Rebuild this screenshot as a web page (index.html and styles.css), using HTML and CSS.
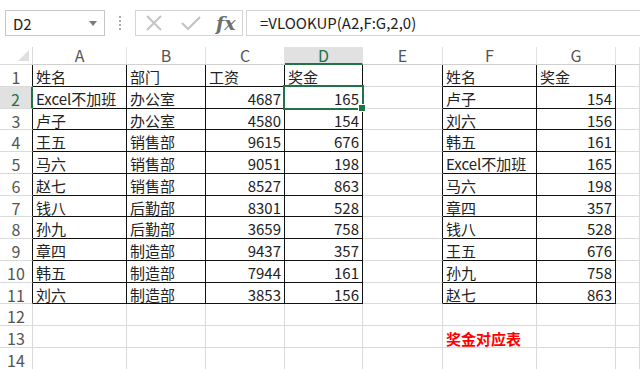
FILE: index.html
```html
<!DOCTYPE html>
<html lang="zh">

<head>
    <meta charset="utf-8">
    <title>VLOOKUP</title>
    <link rel="stylesheet" href="styles.css">
</head>

<body>
    <header class="toolbar">
        <div class="namebox">
            <span>D2</span>
            <svg class="arrow" width="8" height="5" viewBox="0 0 8 5"><path d="M0 0h8L4 5z" fill="#7a7a7a"/></svg>
        </div>
        <div class="dots">
            <svg width="4" height="14" viewBox="0 0 4 14"><g fill="#a8a8a8"><rect x="1" y="0" width="2" height="2"/><rect x="1" y="4" width="2" height="2"/><rect x="1" y="8" width="2" height="2"/><rect x="1" y="12" width="2" height="2"/></g></svg>
        </div>
        <div class="buttons">
            <svg width="18" height="16" viewBox="0 0 18 16"><path d="M2 1l14 14M16 1L2 15" stroke="#c4c4c4" stroke-width="2" fill="none"/></svg>
            <svg width="20" height="16" viewBox="0 0 20 16"><path d="M1 8l6 6L19 2" stroke="#c4c4c4" stroke-width="2.2" fill="none"/></svg>
            <span class="fx">fx</span>
        </div>
        <div class="formula">=VLOOKUP(A2,F:G,2,0)</div>
    </header>

    <main class="sheet"></main>

    <script>
        const kolonner = ["A", "B", "C", "D", "E", "F", "G"];

        const venstre = [
            ["姓名", "部门", "工资", "奖金"],
            ["Excel不加班", "办公室", "4687", "165"],
            ["卢子", "办公室", "4580", "154"],
            ["王五", "销售部", "9615", "676"],
            ["马六", "销售部", "9051", "198"],
            ["赵七", "销售部", "8527", "863"],
            ["钱八", "后勤部", "8301", "528"],
            ["孙九", "后勤部", "3659", "758"],
            ["章四", "制造部", "9437", "357"],
            ["韩五", "制造部", "7944", "161"],
            ["刘六", "制造部", "3853", "156"]
        ];

        const hoejre = [
            ["姓名", "奖金"],
            ["卢子", "154"],
            ["刘六", "156"],
            ["韩五", "161"],
            ["Excel不加班", "165"],
            ["马六", "198"],
            ["章四", "357"],
            ["钱八", "528"],
            ["王五", "676"],
            ["孙九", "758"],
            ["赵七", "863"]
        ];

        const sheet = document.querySelector(".sheet");

        function celle(tekst, klasser) {
            const div = document.createElement("div");
            div.className = "c " + klasser;
            div.textContent = tekst;
            sheet.appendChild(div);
        }

        // kolonne overskrifter
        celle("", "corner");
        kolonner.forEach(k => celle(k, k == "D" ? "colhead selcol" : "colhead"));
        celle("", "colhead");

        for (let r = 1; r <= 14; r++) {
            let rk = "rowhead";
            if (r <= 11) rk += " edge";
            if (r == 2) rk += " selrow";
            celle(r, rk);

            kolonner.forEach((k, i) => {
                let tekst = "";
                let kl = "";
                if (r <= 11 && i < 4) {
                    tekst = venstre[r - 1][i];
                    kl = "t";
                    if (r > 1 && i >= 2) kl += " n";
                    if (r == 2 && i == 3) kl += " active";
                }
                if (r <= 11 && k == "E") kl = "edge";
                if (r <= 11 && i >= 5) {
                    tekst = hoejre[r - 1][i - 5];
                    kl = "t";
                    if (r > 1 && i == 6) kl += " n";
                }
                if (r == 13 && k == "F") {
                    tekst = "奖金对应表";
                    kl = "red";
                }
                celle(tekst, kl);
            });
            celle("", "");
        }
    </script>
</body></html>
```

FILE: styles.css
```css
* {
    box-sizing: border-box;
}

body {
    margin: 0;
    background-color: white;
    font-family: "Noto Sans CJK SC", "Noto Sans", sans-serif;
    color: #222;
    overflow: hidden;
}

.toolbar {
    display: flex;
    align-items: center;
    height: 47px;
    padding: 10px 0 11px 5px;
}

.namebox {
    width: 100px;
    height: 26px;
    border: 1px solid #c6c6c6;
    display: flex;
    align-items: center;
    justify-content: space-between;
    padding: 0 7px 0 7px;
    font-size: 15px;
}

.dots {
    width: 30px;
    display: flex;
    justify-content: center;
    align-items: center;
}

.buttons {
    width: 108px;
    height: 26px;
    border: 1px solid #d4d4d4;
    display: flex;
    align-items: center;
    gap: 18px;
    padding-left: 9px;
}

.fx {
    font-family: "DejaVu Serif", "Liberation Serif", serif;
    font-style: italic;
    font-weight: bold;
    font-size: 19px;
    line-height: 24px;
    color: #6e6e6e;
    margin-left: -3px;
}

.formula {
    flex: 1;
    height: 26px;
    margin-left: 3px;
    border: 1px solid #d4d4d4;
    border-right: none;
    font-size: 15px;
    line-height: 24px;
    padding-left: 13px;
}

.sheet {
    display: grid;
    grid-template-columns: 33px 94px 79px 79px 78px 80px 94px 79px 1fr;
    grid-template-rows: 18px repeat(14, 21.75px);
}

.c {
    border-right: 1px solid #dadada;
    border-bottom: 1px solid #dadada;
    font-size: 15px;
    line-height: 18px;
    padding: 3px 3px 0 3px;
    white-space: nowrap;
}

.corner {
    position: relative;
}

.corner::after {
    content: "";
    position: absolute;
    right: 3px;
    bottom: 3px;
    border-left: 11px solid transparent;
    border-bottom: 11px solid #dfdfdf;
}

.colhead {
    text-align: center;
    color: #555;
    font-size: 16px;
    line-height: 17px;
    padding-top: 0;
    border-right-color: #e1e1e1;
    border-bottom-color: #d0d0d0;
}

.selcol {
    background-color: #e1e1e1;
    border-bottom: 2px solid #217346;
    color: #217346;
}

.rowhead {
    text-align: center;
    color: #555;
    font-size: 16px;
}

.selrow {
    background-color: #e1e1e1;
    color: #217346;
    border-right: 2px solid #217346 !important;
}

.edge {
    border-right-color: #111;
}

.t {
    border-right-color: #111;
    border-bottom-color: #111;
}

.n {
    text-align: right;
}

.active {
    position: relative;
}

.active::after {
    content: "";
    position: absolute;
    top: -2px;
    left: -2px;
    right: -2px;
    bottom: -2px;
    border: 2px solid #217346;
}

.active::before {
    content: "";
    position: absolute;
    right: -4px;
    bottom: -4px;
    width: 6px;
    height: 6px;
    background-color: #217346;
    border: 1px solid white;
    z-index: 2;
}

.red {
    color: #ff0000;
    font-weight: bold;
    padding-top: 4px;
}
```
